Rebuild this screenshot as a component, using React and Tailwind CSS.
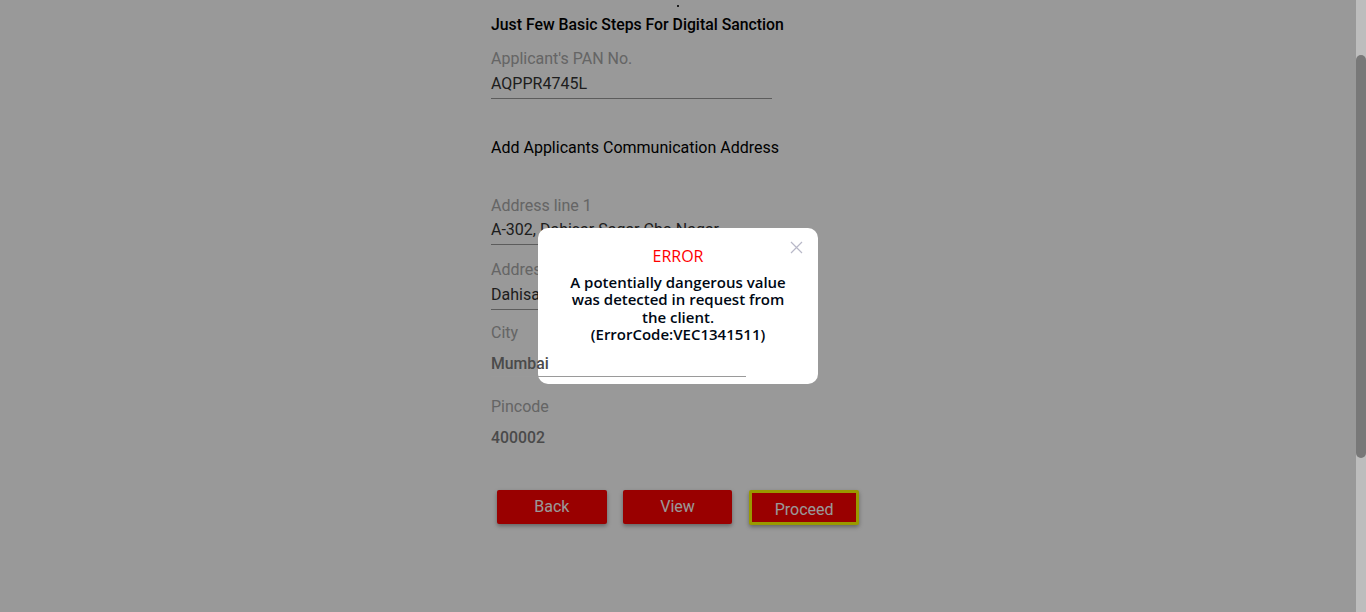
import React from "react";

export default function App() {
  return (
    <div className="flex h-[612px] w-full overflow-hidden bg-white" style={{ fontFamily: "Roboto, 'Liberation Sans', sans-serif" }}>
      <div className="relative flex-1">
        <div className="mx-auto w-[374px]">
          <div className="flex justify-center pt-[5px]">
            <div className="h-[2px] w-[2px] bg-[#333]" />
          </div>
          <h1 className="mt-[8px] text-[15.8px] leading-[20px] font-medium text-black">
            Just Few Basic Steps For Digital Sanction
          </h1>

          <div className="mt-[14px] text-[16px] leading-[20px] text-[#a8a8a8]">Applicant's PAN No.</div>
          <div className="mt-[5px] text-[16px] leading-[20px] text-[#333]">AQPPR4745L</div>
          <div className="mt-[4px] h-px w-[281px] bg-[#999]" />

          <div className="mt-[39px] text-[16px] leading-[20px] text-black">
            Add Applicants Communication Address
          </div>

          <div className="mt-[38px] text-[16px] leading-[20px] text-[#a8a8a8]">Address line 1</div>
          <div className="mt-[4px] text-[16px] leading-[20px] text-[#333]">A-302, Dahisar Sagar Cho Nagar</div>
          <div className="mt-[4px] h-px w-[281px] bg-[#999]" />

          <div className="mt-[15px] text-[16px] leading-[20px] text-[#a8a8a8]">Address line 2</div>
          <div className="mt-[5px] text-[16px] leading-[20px] text-[#333]">Dahisar East</div>
          <div className="mt-[4px] h-px w-[281px] bg-[#999]" />

          <div className="mt-[13px] text-[16px] leading-[20px] text-[#a8a8a8]">City</div>
          <div className="relative z-30">
            <div className="mt-[11px] text-[15.8px] leading-[20px] font-medium text-[#4a4a4a]">Mumbai</div>
            <div className="mt-[2px] h-px w-[255px] bg-[#9a9a9a]" />
          </div>

          <div className="mt-[20px] text-[16px] leading-[20px] text-[#a8a8a8]">Pincode</div>
          <div className="mt-[11px] text-[15.8px] leading-[20px] font-medium text-[#7c7c7c]">400002</div>

          <div className="mt-[42px] flex items-start gap-[16px] px-[6px]">
            <button className="h-[34px] w-[110px] rounded-[2px] bg-[#ff0000] pb-[1px] text-[16px] text-white shadow-[0_2px_4px_rgba(0,0,0,0.35)]">
              Back
            </button>
            <button className="h-[34px] w-[110px] rounded-[2px] bg-[#ff0000] pb-[1px] text-[16px] text-white shadow-[0_2px_4px_rgba(0,0,0,0.35)]">
              View
            </button>
            <button className="ml-[1px] h-[35px] w-[110px] rounded-[2px] border-[3px] border-[#ffff00] bg-[#ff0000] pt-[5px] text-[16px] text-white shadow-[0_2px_4px_rgba(0,0,0,0.35)]">
              Proceed
            </button>
          </div>
        </div>

        <div className="absolute inset-0 z-10 bg-black/40" />

        <div
          className="absolute left-[538px] top-[228px] z-20 flex h-[156px] w-[280px] flex-col items-center rounded-[10px] bg-white pt-[18px]"
          style={{ fontFamily: "'Open Sans', 'Noto Sans', sans-serif" }}
        >
          <button className="absolute right-[15px] top-[13px] text-[#b8b8c8]">
            <svg width="13" height="13" viewBox="0 0 13 13" fill="none" stroke="currentColor" strokeWidth="1.2">
              <path d="M1 1 L12 12 M12 1 L1 12" />
            </svg>
          </button>
          <div className="text-[16px] leading-[20px] text-[#ff0000]">ERROR</div>
          <div className="mt-[8px] text-center text-[15px] leading-[17.4px] font-semibold text-[#000814]">
            A potentially dangerous value
            <br />
            was detected in request from
            <br />
            the client.
            <br />
            (ErrorCode:VEC1341511)
          </div>
        </div>
      </div>

      <div className="flex w-[10px] flex-col bg-[#bdbdbd] pt-[55px]">
        <div className="h-[403px] w-full rounded-full bg-[#787878]" />
      </div>
    </div>
  );
}
